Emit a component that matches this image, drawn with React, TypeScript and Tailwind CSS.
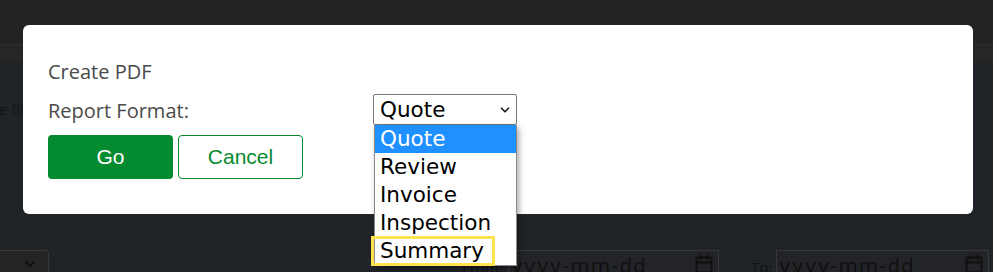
import { ChevronDown, Calendar } from 'lucide-react'

const options = ['Quote', 'Review', 'Invoice', 'Inspection', 'Summary']

export default function App() {
  return (
    <div className="relative w-[993px] h-[272px] overflow-hidden bg-[#202327] font-['Open_Sans',sans-serif]">
      {/* dimmed page behind the modal */}
      <div className="h-[45px] bg-[#232323] border-b border-[#2d2d2d]" />
      <div className="h-[17px] bg-[#262626]" />
      <div className="pt-[40px] h-[188px]">
        <p className="text-[15px] text-[#141518] leading-none -ml-[1px]">e filter</p>
      </div>
      <div className="flex items-start">
        <div className="w-[51px] h-[30px] border border-[#383838] bg-[#242424] rounded-[3px] -ml-[2px] flex justify-end pr-[10px] pt-[5px]">
          <ChevronDown size={16} strokeWidth={3} className="text-[#111]" />
        </div>
        <div className="ml-[413px] pt-[10px] text-[15px] text-[#111] leading-none w-[46px]">From:</div>
        <div className="w-[211px] h-[30px] border border-[#383838] bg-[#222428] flex items-start justify-between px-[2px] pt-[3px]">
          <span className="text-[20px] leading-none text-[#111] font-['DejaVu_Sans',sans-serif] tracking-[1px] pt-[2px]">yyyy-mm-dd</span>
          <Calendar size={20} strokeWidth={2.5} className="text-[#111] mr-[2px]" />
        </div>
        <div className="ml-[32px] pt-[10px] text-[15px] text-[#111] leading-none w-[25px]">To:</div>
        <div className="w-[213px] h-[30px] border border-[#383838] bg-[#222428] flex items-start justify-between px-[2px] pt-[3px]">
          <span className="text-[20px] leading-none text-[#111] font-['DejaVu_Sans',sans-serif] tracking-[1px] pt-[2px]">yyyy-mm-dd</span>
          <Calendar size={20} strokeWidth={2.5} className="text-[#111] mr-[2px]" />
        </div>
      </div>

      {/* modal */}
      <div className="absolute left-[23px] top-[25px] w-[950px] h-[189px] bg-white rounded-[6px] px-[25px] pt-[33px]">
        <p className="text-[20px] leading-[28px] text-[#4a4a4a]">Create PDF</p>
        <div className="flex items-center mt-[8px] h-[31px]">
          <span className="text-[20px] leading-[28px] text-[#4a4a4a] w-[325px] pt-[2px]">Report Format:</span>
          <div className="w-[144px] h-[31px] border border-[#767676] rounded-[2px] flex items-center justify-between pl-[6px] pr-[4px] font-['DejaVu_Sans',sans-serif] text-[21.5px] text-black">
            <span className="leading-none">Quote</span>
            <ChevronDown size={14} strokeWidth={3} className="text-[#222]" />
          </div>
        </div>
        <div className="flex gap-[5px] mt-[10px] font-['Liberation_Sans',Arial,sans-serif] text-[21px]">
          <button className="w-[125px] h-[44px] rounded-[4px] bg-[#048a2f] text-white">Go</button>
          <button className="w-[125px] h-[44px] rounded-[4px] border border-[#048a2f] bg-white text-[#048a2f]">Cancel</button>
        </div>
      </div>

      {/* open select list */}
      <div className="absolute left-[374px] top-[125px] w-[143px] bg-white border border-[#8a8a8a] border-t-0 shadow-[2px_3px_6px_rgba(0,0,0,0.35)] font-['DejaVu_Sans',sans-serif] text-[21.5px] text-black">
        {options.map((o, i) => (
          <div
            key={o}
            className={`h-[28px] pl-[5px] flex items-center leading-none ${i === 0 ? 'bg-[#1e90ff] text-white' : ''}`}
          >
            {o}
          </div>
        ))}
      </div>
      <div className="absolute left-[371px] top-[236px] w-[124px] h-[30px] border-[3px] border-[#ffe34d] pointer-events-none" />
    </div>
  )
}
